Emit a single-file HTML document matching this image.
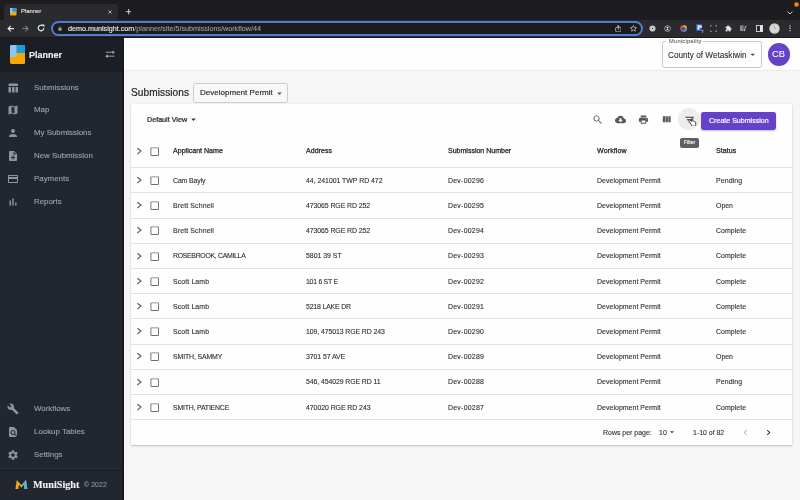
<!DOCTYPE html>
<html><head><meta charset="utf-8">
<style>
*{box-sizing:border-box;margin:0;padding:0}
html,body{width:800px;height:500px;overflow:hidden;background:#f6f6f6;font-family:"Liberation Sans",sans-serif}
body{position:relative}
.a{position:absolute;display:block}
.t{position:absolute;white-space:nowrap;line-height:1;will-change:transform;-webkit-text-stroke-width:0.12px}
</style></head><body>
<div class="a" style="left:0.00px;top:0.00px;width:800.00px;height:19.60px;background:#1d1d1f"></div>
<div class="a" style="left:4.00px;top:4.20px;width:114.00px;height:16.00px;background:#2a2b2e;border-radius:4px 4px 0 0"></div>
<div class="a" style="left:0.00px;top:19.60px;width:800.00px;height:17.00px;background:#2a2b2e"></div>
<div class="a" style="left:0.00px;top:36.60px;width:800.00px;height:1.00px;background:#161617"></div>
<div class="a" style="left:51.00px;top:21.00px;width:591.50px;height:14.90px;border:2px solid #4d7ed4;border-radius:7.5px;background:#1c1c1e"></div>
<svg class="a" style="left:10.00px;top:8.00px;" width="6.50" height="7.50" viewBox="0 0 13 15"><rect x="0" y="0" width="13" height="15" rx="2" fill="#f5a800"/><rect x="0" y="0" width="5" height="10" fill="#8ec5ef"/><rect x="5" y="0" width="8" height="7" fill="#1a9ae0"/></svg>
<div class="t" style="left:21.00px;top:9.35px;font-size:5.9px;color:#e3e3e3">Planner</div>
<svg class="a" style="left:108.00px;top:10.00px;" width="4.00" height="4.00" viewBox="0 0 10 10"><path d="M1 1L9 9M9 1L1 9" stroke="#d8d8d8" stroke-width="1.8"/></svg>
<svg class="a" style="left:125.80px;top:9.30px;" width="5.40" height="5.40" viewBox="0 0 10 10"><path d="M5 0V10M0 5H10" stroke="#e8e8e8" stroke-width="1.6"/></svg>
<svg class="a" style="left:6.90px;top:24.80px;" width="7.20" height="7.20" viewBox="0 0 16 16"><path d="M15.5 8H2.5M8.5 2L2.5 8l6 6" fill="none" stroke="#e8e8e8" stroke-width="2.5"/></svg>
<svg class="a" style="left:22.20px;top:24.80px;" width="7.20" height="7.20" viewBox="0 0 16 16"><path d="M.5 8H13.5M7.5 2l6 6-6 6" fill="none" stroke="#808082" stroke-width="2.3"/></svg>
<svg class="a" style="left:37.10px;top:24.30px;" width="8.00" height="8.00" viewBox="0 0 16 16"><path d="M13.6 8.5A5.6 5.6 0 1 1 11.6 3.7" fill="none" stroke="#e8e8e8" stroke-width="2.4"/><path d="M9.2 1.2h5.6v5.6z" fill="#e8e8e8"/></svg>
<svg class="a" style="left:58.00px;top:26.30px;" width="4.00" height="4.80" viewBox="0 0 8 10"><path d="M2 4.5V3a2 2 0 0 1 4 0v1.5" fill="none" stroke="#9a9a9a" stroke-width="1.2"/><rect x="0.5" y="4.3" width="7" height="5.5" rx="1" fill="#9a9a9a"/></svg>
<div class="t" style="left:67.80px;top:25.10px;font-size:7.2px;color:#ececec">demo.munisight.com<span style="color:#9b9b9b">/planner/site/5/submissions/workflow/44</span></div>
<svg class="a" style="left:614.80px;top:24.80px;" width="6.60" height="7.40" viewBox="0 0 13 15"><rect x="1" y="4.5" width="11" height="9.5" rx="2.5" fill="none" stroke="#c8c8c8" stroke-width="1.6"/><path d="M6.5 9.5V1M4 3.2l2.5-2.2 2.5 2.2" fill="none" stroke="#c8c8c8" stroke-width="1.6"/></svg>
<svg class="a" style="left:629.90px;top:25.40px;" width="7.00" height="6.80" viewBox="0 0 24 23"><path d="M12 1.5l3.1 6.6 7.2.8-5.4 4.9 1.5 7.1L12 17.3l-6.4 3.6 1.5-7.1L1.7 8.9l7.2-.8z" fill="none" stroke="#cfcfcf" stroke-width="2.4" stroke-linejoin="round"/></svg>
<svg class="a" style="left:648.80px;top:24.60px;" width="7.00" height="7.00" viewBox="0 0 14 14"><circle cx="7" cy="7" r="6.2" fill="#bdbdbd"/><circle cx="7" cy="7" r="3.6" fill="#e6e6e6"/><circle cx="7" cy="7" r="1.5" fill="#222"/></svg>
<svg class="a" style="left:664.00px;top:24.60px;" width="7.00" height="7.00" viewBox="0 0 14 14"><circle cx="7" cy="7" r="6.2" fill="#bdbdbd"/><circle cx="7" cy="7" r="5" fill="#2a2b2e"/><path d="M4 3.5h6L7.6 7 10 10.5H4L6.4 7z" fill="#d0d0d0"/></svg>
<svg class="a" style="left:679.50px;top:24.50px;" width="7.20" height="7.20" viewBox="0 0 14 14"><circle cx="7" cy="7" r="6.3" fill="#e0642a"/><path d="M7 .7A6.3 6.3 0 0 1 13.3 7H7z" fill="#f2b830"/><path d="M13.3 7A6.3 6.3 0 0 1 7 13.3V7z" fill="#3fa5e0"/><path d="M7 13.3A6.3 6.3 0 0 1 .7 7H7z" fill="#7b4fd8"/><circle cx="7" cy="7" r="3.3" fill="#35296b"/><circle cx="7" cy="7" r="2.5" fill="#5b56b8"/></svg>
<svg class="a" style="left:695.50px;top:24.00px;" width="8.00" height="9.50" viewBox="0 0 16 19"><rect x="0" y="0" width="12" height="14" rx="1.5" fill="#2e5ec9"/><rect x="3" y="2.5" width="4" height="9" fill="#e6ecff"/><path d="M7 2.5h2.5a2.5 2.5 0 0 1 0 5H7z" fill="#e6ecff"/><text x="11" y="18.5" font-size="7" fill="#cfd8ff" font-family="Liberation Sans" font-weight="bold">7</text></svg>
<svg class="a" style="left:710.00px;top:24.50px;" width="7.00" height="7.00" viewBox="0 0 14 14"><path d="M1 4V1h3M10 1h3v3M13 10v3h-3M4 13H1v-3" fill="none" stroke="#8a8a8a" stroke-width="1.6"/><rect x="4" y="4" width="6" height="6" fill="#2a2b2e"/></svg>
<svg class="a" style="left:725.00px;top:24.50px;" width="7.00" height="7.00" viewBox="0 0 24 24"><path d="M20.5 11H19V7c0-1.1-.9-2-2-2h-4V3.5C13 2.12 11.88 1 10.5 1S8 2.12 8 3.5V5H4c-1.1 0-1.99.9-1.99 2v3.8H3.5c1.49 0 2.7 1.21 2.7 2.7s-1.21 2.7-2.7 2.7H2V20c0 1.1.9 2 2 2h3.8v-1.5c0-1.49 1.21-2.700 2.7-2.7 1.49 0 2.7 1.21 2.7 2.7V22H17c1.1 0 2-.9 2-2v-4h1.5c1.38 0 2.5-1.12 2.5-2.5S21.88 11 20.5 11z" fill="#e8e8e8"/></svg>
<svg class="a" style="left:740.00px;top:24.80px;" width="7.00" height="6.60" viewBox="0 0 14 13"><rect x="0" y="1" width="7" height="11" fill="#8a8a8a"/><rect x="4" y="1" width="5" height="6" fill="#6a6a6a"/><path d="M12.5 1L9 9.5" stroke="#d0d0d0" stroke-width="1.6"/><circle cx="9" cy="10.5" r="1.6" fill="#d0d0d0"/></svg>
<svg class="a" style="left:755.50px;top:24.50px;" width="7.00" height="7.00" viewBox="0 0 14 14"><rect x="0.8" y="0.8" width="12.4" height="12.4" fill="none" stroke="#e8e8e8" stroke-width="1.6"/><rect x="8" y="1" width="5" height="12" fill="#e8e8e8"/></svg>
<svg class="a" style="left:769.00px;top:23.00px;" width="11.00" height="11.00" viewBox="0 0 22 22"><circle cx="11" cy="11" r="10.5" fill="#c9c9c9"/><circle cx="11" cy="11" r="8" fill="#d8d8d8"/><path d="M9 5l4 7" stroke="#b08a30" stroke-width="1.5"/></svg>
<svg class="a" style="left:788.50px;top:25.20px;" width="2.00" height="6.60" viewBox="0 0 4 14"><circle cx="2" cy="2" r="1.5" fill="#e0e0e0"/><circle cx="2" cy="7" r="1.5" fill="#e0e0e0"/><circle cx="2" cy="12" r="1.5" fill="#e0e0e0"/></svg>
<svg class="a" style="left:786.50px;top:10.50px;" width="6.00" height="3.60" viewBox="0 0 12 7"><path d="M1 1l5 5 5-5" fill="none" stroke="#e0e0e0" stroke-width="1.8"/></svg>
<svg class="a" style="left:793.50px;top:2.00px;" width="5.00" height="5.00" viewBox="0 0 10 10"><circle cx="5" cy="5" r="4.5" fill="#f08a1c"/></svg>
<div class="a" style="left:0.00px;top:37.50px;width:123.40px;height:462.50px;background:#22262f"></div>
<div class="a" style="left:0.00px;top:37.50px;width:123.40px;height:34.00px;background:#1b1e25"></div>
<div class="a" style="left:121.80px;top:37.50px;width:2.20px;height:462.50px;background:linear-gradient(90deg,#1d2027,#121419)"></div>
<svg class="a" style="left:9.50px;top:45.00px;" width="15.50" height="19.00" viewBox="0 0 31 38"><defs><clipPath id="lg"><rect x="0" y="0" width="31" height="38" rx="3.5"/></clipPath></defs><g clip-path="url(#lg)"><rect x="0" y="0" width="31" height="38" fill="#f5a900"/><rect x="0" y="0" width="13" height="24" fill="#8ec6f0"/><rect x="13" y="0" width="18" height="16" fill="#1a9be2"/><rect x="13" y="16" width="18" height="8" fill="#f5a900"/></g></svg>
<div class="t" style="left:29.00px;top:51.00px;font-size:9px;color:#f4f4f4;font-weight:700">Planner</div>
<svg class="a" style="left:105.00px;top:50.30px;" width="10.50" height="8.40" viewBox="0 0 21 17"><path d="M1 4.5H17M1 12.5H19" stroke="#a3a7af" stroke-width="1.9"/><path d="M15 .8L20 4.5 15 8.2z" fill="#a3a7af"/><path d="M6 8.8L1 12.5 6 16.2z" fill="#a3a7af"/></svg>
<svg class="a" style="left:7.30px;top:81.60px;" width="12.00" height="12.00" viewBox="0 0 24 24"><path d="M10 10.02h5V21h-5zM17 21h3c1.1 0 2-.9 2-2v-9h-5v11zm3-18H5c-1.1 0-2 .9-2 2v3h19V5c0-1.1-.9-2-2-2zM3 19c0 1.1.9 2 2 2h3V10H3v9z" fill="#8f949d"/></svg>
<div class="t" style="left:34.40px;top:83.65px;font-size:7.9px;color:#9da1aa">Submissions</div>
<svg class="a" style="left:7.30px;top:104.40px;" width="12.00" height="12.00" viewBox="0 0 24 24"><path d="M20.5 3l-.16.03L15 5.1 9 3 3.36 4.9c-.21.07-.36.25-.36.48V20.5c0 .28.22.5.5.5l.16-.03L9 18.9l6 2.1 5.64-1.9c.21-.07.36-.25.36-.48V3.5c0-.28-.22-.5-.5-.5zM15 19l-6-2.11V5l6 2.11V19z" fill="#8f949d"/></svg>
<div class="t" style="left:34.40px;top:106.45px;font-size:7.9px;color:#9da1aa">Map</div>
<svg class="a" style="left:7.30px;top:127.20px;" width="12.00" height="12.00" viewBox="0 0 24 24"><path d="M12 12c2.21 0 4-1.79 4-4s-1.79-4-4-4-4 1.79-4 4 1.79 4 4 4zm0 2c-2.67 0-8 1.34-8 4v2h16v-2c0-2.66-5.33-4-8-4z" fill="#8f949d"/></svg>
<div class="t" style="left:34.40px;top:129.25px;font-size:7.9px;color:#9da1aa">My Submissions</div>
<svg class="a" style="left:7.30px;top:150.00px;" width="12.00" height="12.00" viewBox="0 0 24 24"><path d="M14 2H6c-1.1 0-1.99.9-1.99 2L4 20c0 1.1.89 2 1.99 2H18c1.1 0 2-.9 2-2V8l-6-6zm2 14h-3v3h-2v-3H8v-2h3v-3h2v3h3v2zm-3-7V3.5L18.5 9H13z" fill="#8f949d"/></svg>
<div class="t" style="left:34.40px;top:152.05px;font-size:7.9px;color:#9da1aa">New Submission</div>
<svg class="a" style="left:7.30px;top:172.80px;" width="12.00" height="12.00" viewBox="0 0 24 24"><path d="M20 4H4c-1.11 0-1.99.89-1.99 2L2 18c0 1.11.89 2 2 2h16c1.11 0 2-.89 2-2V6c0-1.11-.89-2-2-2zm0 14H4v-6h16v6zm0-10H4V6h16v2z" fill="#8f949d"/></svg>
<div class="t" style="left:34.40px;top:174.85px;font-size:7.9px;color:#9da1aa">Payments</div>
<svg class="a" style="left:7.30px;top:195.60px;" width="12.00" height="12.00" viewBox="0 0 24 24"><path d="M5 9.2h3V19H5zM10.6 5h2.8v14h-2.8zm5.6 8H19v6h-2.8z" fill="#8f949d"/></svg>
<div class="t" style="left:34.40px;top:197.65px;font-size:7.9px;color:#9da1aa">Reports</div>
<svg class="a" style="left:7.30px;top:403.30px;" width="12.00" height="12.00" viewBox="0 0 24 24"><path d="M22.7 19l-9.1-9.1c.9-2.3.4-5-1.5-6.9-2-2-5-2.4-7.4-1.3L9 6 6 9 1.6 4.7C.4 7.1.9 10.1 2.9 12.1c1.9 1.9 4.6 2.4 6.9 1.5l9.1 9.1c.4.4 1 .4 1.4 0l2.3-2.3c.5-.4.5-1.1.1-1.4z" fill="#8f949d"/></svg>
<div class="t" style="left:34.40px;top:405.35px;font-size:7.9px;color:#9da1aa">Workflows</div>
<svg class="a" style="left:7.30px;top:426.20px;" width="12.00" height="12.00" viewBox="0 0 24 24"><path d="M20 19.59V8l-6-6H6c-1.1 0-1.99.9-1.99 2L4 20c0 1.1.89 2 1.99 2H18c.45 0 .85-.15 1.19-.4l-4.43-4.43c-.8.52-1.74.83-2.76.83-2.76 0-5-2.24-5-5s2.24-5 5-5 5 2.24 5 5c0 1.02-.31 1.96-.83 2.75L20 19.59zM9 13c0 1.66 1.34 3 3 3s3-1.34 3-3-1.34-3-3-3-3 1.34-3 3z" fill="#8f949d"/></svg>
<div class="t" style="left:34.40px;top:428.25px;font-size:7.9px;color:#9da1aa">Lookup Tables</div>
<svg class="a" style="left:7.30px;top:449.10px;" width="12.00" height="12.00" viewBox="0 0 24 24"><path d="M19.14 12.94c.04-.3.06-.61.06-.94 0-.32-.02-.64-.07-.94l2.03-1.58c.18-.14.23-.41.12-.61l-1.92-3.32c-.12-.22-.37-.29-.59-.22l-2.39.96c-.5-.38-1.03-.7-1.62-.94l-.36-2.54c-.04-.24-.24-.41-.48-.41h-3.84c-.24 0-.43.17-.47.41l-.36 2.54c-.59.24-1.130.57-1.62.94l-2.39-.96c-.22-.08-.47 0-.59.22L2.74 8.87c-.12.21-.08.47.12.61l2.03 1.58c-.05.3-.09.63-.09.94s.02.64.07.94l-2.03 1.58c-.18.14-.23.41-.12.61l1.92 3.32c.12.22.37.29.59.22l2.39-.96c.5.38 1.03.7 1.62.94l.36 2.54c.05.24.24.41.48.41h3.840c.24 0 .44-.17.47-.41l.36-2.54c.59-.24 1.13-.56 1.62-.94l2.39.96c.22.08.47 0 .59-.22l1.92-3.32c.12-.22.07-.47-.12-.61l-2.01-1.58zM12 15.6c-1.98 0-3.6-1.62-3.6-3.6s1.62-3.6 3.6-3.6 3.6 1.62 3.6 3.6-1.62 3.6-3.6 3.6z" fill="#8f949d"/></svg>
<div class="t" style="left:34.40px;top:451.15px;font-size:7.9px;color:#9da1aa">Settings</div>
<div class="a" style="left:0.00px;top:469.80px;width:123.40px;height:0.80px;background:#181b21"></div>
<svg class="a" style="left:15.30px;top:479.60px;" width="12.80" height="9.20" viewBox="0 0 25 19"><path d="M0 19L3 0l9.5 11L22 0l3 19h-6l-1.5-9-5 6-5-6L6 19z" fill="#f2a81d"/><path d="M12.5 11L22 0l3 19h-6l-1.5-9z" fill="#4fb2e3"/><path d="M3 0l9.5 11-1.5 2z" fill="#6cc04a"/></svg>
<div class="t" style="left:33.00px;top:480.10px;font-size:10.2px;color:#f0f0f0;font-weight:700;font-family:'Liberation Serif'">MuniSight</div>
<div class="t" style="left:84.00px;top:481.75px;font-size:6.9px;color:#8e939c;letter-spacing:0.1px">© 2022</div>
<div class="a" style="left:124.00px;top:37.50px;width:676.00px;height:33.20px;background:#fdfdfd;border-bottom:0.6px solid #ebebeb"></div>
<div class="a" style="left:661.80px;top:41.00px;width:100.20px;height:27.00px;border:0.7px solid #c9c9c9;border-radius:2.4px"></div>
<div class="a" style="left:666.20px;top:40.00px;width:36.40px;height:3.00px;background:#fff"></div>
<div class="t" style="left:668.90px;top:38.60px;font-size:5.8px;color:#6b6b6b;letter-spacing:0.2px">Municipality</div>
<div class="t" style="left:668.10px;top:51.50px;font-size:8.2px;color:#2a2a2a;-webkit-text-stroke-width:0.08px">County of Wetaskiwin</div>
<svg class="a" style="left:746.80px;top:49.30px;" width="11.40" height="11.40" viewBox="0 0 24 24"><path d="M7 10l5 5 5-5z" fill="#555"/></svg>
<div class="a" style="left:767.80px;top:43.10px;width:22.60px;height:22.60px;border-radius:50%;background:#6542c8"></div>
<div class="t" style="left:772.30px;top:50.35px;font-size:9.3px;color:#fff;-webkit-text-stroke-width:0.05px">CB</div>
<div class="t" style="left:131.30px;top:87.75px;font-size:10.1px;color:#1e1e1e;letter-spacing:0.08px;-webkit-text-stroke-width:0.2px">Submissions</div>
<div class="a" style="left:193.00px;top:83.20px;width:95.00px;height:19.40px;border:0.7px solid #cdcdcd;border-radius:2.4px;background:#f8f8f8"></div>
<div class="t" style="left:199.70px;top:89.18px;font-size:8.04px;color:#2a2a2a;-webkit-text-stroke-width:0.16px">Development Permit</div>
<svg class="a" style="left:274.00px;top:87.50px;" width="11.00" height="11.00" viewBox="0 0 24 24"><path d="M7 10l5 5 5-5z" fill="#555"/></svg>
<div class="a" style="left:131.30px;top:104.00px;width:661.00px;height:341.00px;background:#fefefe;border-radius:1.5px;box-shadow:0 1px 2px rgba(0,0,0,.22),0 0 1.2px rgba(0,0,0,.1)"></div>
<div class="t" style="left:146.90px;top:116.82px;font-size:7.17px;color:#262626;-webkit-text-stroke-width:0.22px">Default View</div>
<svg class="a" style="left:187.60px;top:114.10px;" width="11.00" height="11.00" viewBox="0 0 24 24"><path d="M7 10l5 5 5-5z" fill="#333"/></svg>
<div class="a" style="left:678.20px;top:108.10px;width:21.60px;height:21.60px;border-radius:50%;background:#ededed"></div>
<svg class="a" style="left:592.30px;top:114.10px;" width="11.40" height="11.40" viewBox="0 0 24 24"><path d="M15.5 14h-.79l-.28-.27C15.41 12.59 16 11.11 16 9.5 16 5.91 13.09 3 9.5 3S3 5.91 3 9.5 5.91 16 9.5 16c1.61 0 3.09-.59 4.23-1.57l.27.28v.79l5 4.99L20.49 19l-4.99-5zm-6 0C7.01 14 5 11.990 5 9.5S7.01 5 9.5 5 14 7.01 14 9.5 11.99 14 9.5 14z" fill="#585858"/></svg>
<svg class="a" style="left:615.00px;top:114.30px;" width="11.00" height="11.00" viewBox="0 0 24 24"><path d="M19.35 10.04C18.67 6.59 15.64 4 12 4 9.11 4 6.6 5.64 5.35 8.04 2.34 8.36 0 10.91 0 14c0 3.31 2.69 6 6 6h13c2.76 0 5-2.24 5-5 0-2.64-2.05-4.78-4.65-4.96zM17 13l-5 5-5-5h3V9h4v4h3z" fill="#585858"/></svg>
<svg class="a" style="left:638.30px;top:114.30px;" width="11.00" height="11.00" viewBox="0 0 24 24"><path d="M19 8H5c-1.66 0-3 1.34-3 3v6h4v4h12v-4h4v-6c0-1.66-1.34-3-3-3zm-3 11H8v-5h8v5zm3-7c-.55 0-1-.45-1-1s.45-1 1-1 1 .45 1 1-.45 1-1 1zm-1-9H6v4h12V3z" fill="#585858"/></svg>
<svg class="a" style="left:661.30px;top:114.30px;" width="11.00" height="11.00" viewBox="0 0 24 24"><path d="M10 18h5V5h-5v13zm-6 0h5V5H4v13zM16 5v13h5V5h-5z" fill="#585858"/></svg>
<svg class="a" style="left:683.80px;top:113.70px;" width="11.40" height="11.40" viewBox="0 0 24 24"><path d="M10 18h4v-2h-4v2zM3 6v2h18V6H3zm3 7h12v-2H6v2z" fill="#3a3a3a"/></svg>
<svg class="a" style="left:687.80px;top:117.60px;" width="9.20" height="8.40" viewBox="0 0 14 13"><path d="M1.2 3.2c.5-.6 1.3-.6 1.8-.1l2.4 2.2V1.6c0-.6.5-1 1-1s1 .4 1 1v3.2l.3-.1c.6-.1 1.1.1 1.3.6.5-.2 1.1 0 1.3.5.6-.1 1.2.3 1.3.9l.4 2.7c.1 1.4-.6 2.6-1.8 3.2H6.4L1.3 4.6c-.4-.4-.4-1 0-1.4z" fill="#fff" stroke="#222" stroke-width="1.3" stroke-linejoin="round"/></svg>
<div class="a" style="left:701.00px;top:112.20px;width:75.00px;height:17.60px;background:#6542c8;border-radius:2.4px;box-shadow:0 1px 2px rgba(0,0,0,.25)"></div>
<div class="t" style="left:708.70px;top:117.27px;font-size:7.07px;color:#fff;-webkit-text-stroke-width:0.18px">Create Submission</div>
<div class="a" style="left:680.40px;top:137.70px;width:18.40px;height:9.90px;background:#5f5f5f;border-radius:2px"></div>
<div class="t" style="left:684.10px;top:140.10px;font-size:5px;color:#fff">Filter</div>
<div class="a" style="left:131.30px;top:167.10px;width:660.50px;height:0.60px;background:#e2e2e2"></div>
<div class="t" style="left:172.50px;top:147.17px;font-size:7.05px;color:#222;letter-spacing:0.008px;-webkit-text-stroke-width:0.25px">Applicant Name</div>
<div class="t" style="left:306.20px;top:147.17px;font-size:7.05px;color:#222;letter-spacing:0.033px;-webkit-text-stroke-width:0.25px">Address</div>
<div class="t" style="left:448.00px;top:147.17px;font-size:7.05px;color:#222;letter-spacing:-0.019px;-webkit-text-stroke-width:0.25px">Submission Number</div>
<div class="t" style="left:597.10px;top:147.17px;font-size:7.05px;color:#222;letter-spacing:0.114px;-webkit-text-stroke-width:0.25px">Workflow</div>
<div class="t" style="left:716.10px;top:147.17px;font-size:7.05px;color:#222;letter-spacing:0.08px;-webkit-text-stroke-width:0.25px">Status</div>
<svg class="a" style="left:149.00px;top:145.90px;" width="11.40" height="11.40" viewBox="0 0 24 24"><path d="M19 5v14H5V5h14m0-2H5c-1.1 0-2 .9-2 2v14c0 1.1.9 2 2 2h14c1.1 0 2-.9 2-2V5c0-1.1-.9-2-2-2z" fill="#6f6f6f"/></svg>
<svg class="a" style="left:136.00px;top:147.00px;" width="6.00" height="8.00" viewBox="0 0 6 8"><path d="M1.4 1.2L4.9 4.1 1.4 7" fill="none" stroke="#5a5a5a" stroke-width="1.15"/></svg>
<div class="a" style="left:131.30px;top:192.30px;width:660.50px;height:0.60px;background:#e2e2e2"></div>
<div class="t" style="left:172.50px;top:177.72px;font-size:6.95px;color:#333;letter-spacing:-0.125px;transform:scaleY(1.09);transform-origin:0 55%">Cam Bayly</div>
<div class="t" style="left:306.20px;top:177.72px;font-size:6.95px;color:#333;letter-spacing:-0.038px;transform:scaleY(1.09);transform-origin:0 55%">44, 241001 TWP RD 472</div>
<div class="t" style="left:448.00px;top:177.72px;font-size:6.95px;color:#333;letter-spacing:0.25px;transform:scaleY(1.09);transform-origin:0 55%">Dev-00296</div>
<div class="t" style="left:597.10px;top:177.72px;font-size:6.95px;color:#333;letter-spacing:0.047px;transform:scaleY(1.09);transform-origin:0 55%">Development Permit</div>
<div class="t" style="left:716.10px;top:177.72px;font-size:6.95px;color:#333;letter-spacing:0.1px;transform:scaleY(1.09);transform-origin:0 55%">Pending</div>
<svg class="a" style="left:149.00px;top:174.90px;" width="11.40" height="11.40" viewBox="0 0 24 24"><path d="M19 5v14H5V5h14m0-2H5c-1.1 0-2 .9-2 2v14c0 1.1.9 2 2 2h14c1.1 0 2-.9 2-2V5c0-1.1-.9-2-2-2z" fill="#6f6f6f"/></svg>
<svg class="a" style="left:136.00px;top:176.00px;" width="6.00" height="8.00" viewBox="0 0 6 8"><path d="M1.4 1.2L4.9 4.1 1.4 7" fill="none" stroke="#5a5a5a" stroke-width="1.15"/></svg>
<div class="a" style="left:131.30px;top:217.50px;width:660.50px;height:0.60px;background:#e2e2e2"></div>
<div class="t" style="left:172.50px;top:202.92px;font-size:6.95px;color:#333;letter-spacing:0.125px;transform:scaleY(1.09);transform-origin:0 55%">Brett Schnell</div>
<div class="t" style="left:306.20px;top:202.92px;font-size:6.95px;color:#333;letter-spacing:-0.094px;transform:scaleY(1.09);transform-origin:0 55%">473065 RGE RD 252</div>
<div class="t" style="left:448.00px;top:202.92px;font-size:6.95px;color:#333;letter-spacing:0.25px;transform:scaleY(1.09);transform-origin:0 55%">Dev-00295</div>
<div class="t" style="left:597.10px;top:202.92px;font-size:6.95px;color:#333;letter-spacing:0.047px;transform:scaleY(1.09);transform-origin:0 55%">Development Permit</div>
<div class="t" style="left:716.10px;top:202.92px;font-size:6.95px;color:#333;transform:scaleY(1.09);transform-origin:0 55%">Open</div>
<svg class="a" style="left:149.00px;top:200.10px;" width="11.40" height="11.40" viewBox="0 0 24 24"><path d="M19 5v14H5V5h14m0-2H5c-1.1 0-2 .9-2 2v14c0 1.1.9 2 2 2h14c1.1 0 2-.9 2-2V5c0-1.1-.9-2-2-2z" fill="#6f6f6f"/></svg>
<svg class="a" style="left:136.00px;top:201.20px;" width="6.00" height="8.00" viewBox="0 0 6 8"><path d="M1.4 1.2L4.9 4.1 1.4 7" fill="none" stroke="#5a5a5a" stroke-width="1.15"/></svg>
<div class="a" style="left:131.30px;top:242.70px;width:660.50px;height:0.60px;background:#e2e2e2"></div>
<div class="t" style="left:172.50px;top:228.12px;font-size:6.95px;color:#333;letter-spacing:0.125px;transform:scaleY(1.09);transform-origin:0 55%">Brett Schnell</div>
<div class="t" style="left:306.20px;top:228.12px;font-size:6.95px;color:#333;letter-spacing:-0.094px;transform:scaleY(1.09);transform-origin:0 55%">473065 RGE RD 252</div>
<div class="t" style="left:448.00px;top:228.12px;font-size:6.95px;color:#333;letter-spacing:0.25px;transform:scaleY(1.09);transform-origin:0 55%">Dev-00294</div>
<div class="t" style="left:597.10px;top:228.12px;font-size:6.95px;color:#333;letter-spacing:0.047px;transform:scaleY(1.09);transform-origin:0 55%">Development Permit</div>
<div class="t" style="left:716.10px;top:228.12px;font-size:6.95px;color:#333;letter-spacing:0.057px;transform:scaleY(1.09);transform-origin:0 55%">Complete</div>
<svg class="a" style="left:149.00px;top:225.30px;" width="11.40" height="11.40" viewBox="0 0 24 24"><path d="M19 5v14H5V5h14m0-2H5c-1.1 0-2 .9-2 2v14c0 1.1.9 2 2 2h14c1.1 0 2-.9 2-2V5c0-1.1-.9-2-2-2z" fill="#6f6f6f"/></svg>
<svg class="a" style="left:136.00px;top:226.40px;" width="6.00" height="8.00" viewBox="0 0 6 8"><path d="M1.4 1.2L4.9 4.1 1.4 7" fill="none" stroke="#5a5a5a" stroke-width="1.15"/></svg>
<div class="a" style="left:131.30px;top:267.90px;width:660.50px;height:0.60px;background:#e2e2e2"></div>
<div class="t" style="left:172.50px;top:253.33px;font-size:6.95px;color:#333;letter-spacing:-0.324px;transform:scaleY(1.09);transform-origin:0 55%">ROSEBROOK, CAMILLA</div>
<div class="t" style="left:306.20px;top:253.33px;font-size:6.95px;color:#333;letter-spacing:-0.028px;transform:scaleY(1.09);transform-origin:0 55%">5801 39 ST</div>
<div class="t" style="left:448.00px;top:253.33px;font-size:6.95px;color:#333;letter-spacing:0.25px;transform:scaleY(1.09);transform-origin:0 55%">Dev-00293</div>
<div class="t" style="left:597.10px;top:253.33px;font-size:6.95px;color:#333;letter-spacing:0.047px;transform:scaleY(1.09);transform-origin:0 55%">Development Permit</div>
<div class="t" style="left:716.10px;top:253.33px;font-size:6.95px;color:#333;letter-spacing:0.057px;transform:scaleY(1.09);transform-origin:0 55%">Complete</div>
<svg class="a" style="left:149.00px;top:250.50px;" width="11.40" height="11.40" viewBox="0 0 24 24"><path d="M19 5v14H5V5h14m0-2H5c-1.1 0-2 .9-2 2v14c0 1.1.9 2 2 2h14c1.1 0 2-.9 2-2V5c0-1.1-.9-2-2-2z" fill="#6f6f6f"/></svg>
<svg class="a" style="left:136.00px;top:251.60px;" width="6.00" height="8.00" viewBox="0 0 6 8"><path d="M1.4 1.2L4.9 4.1 1.4 7" fill="none" stroke="#5a5a5a" stroke-width="1.15"/></svg>
<div class="a" style="left:131.30px;top:293.10px;width:660.50px;height:0.60px;background:#e2e2e2"></div>
<div class="t" style="left:172.50px;top:278.52px;font-size:6.95px;color:#333;letter-spacing:0.111px;transform:scaleY(1.09);transform-origin:0 55%">Scott Lamb</div>
<div class="t" style="left:306.20px;top:278.52px;font-size:6.95px;color:#333;letter-spacing:-0.278px;transform:scaleY(1.09);transform-origin:0 55%">101 6 ST E</div>
<div class="t" style="left:448.00px;top:278.52px;font-size:6.95px;color:#333;letter-spacing:0.25px;transform:scaleY(1.09);transform-origin:0 55%">Dev-00292</div>
<div class="t" style="left:597.10px;top:278.52px;font-size:6.95px;color:#333;letter-spacing:0.047px;transform:scaleY(1.09);transform-origin:0 55%">Development Permit</div>
<div class="t" style="left:716.10px;top:278.52px;font-size:6.95px;color:#333;letter-spacing:0.057px;transform:scaleY(1.09);transform-origin:0 55%">Complete</div>
<svg class="a" style="left:149.00px;top:275.70px;" width="11.40" height="11.40" viewBox="0 0 24 24"><path d="M19 5v14H5V5h14m0-2H5c-1.1 0-2 .9-2 2v14c0 1.1.9 2 2 2h14c1.1 0 2-.9 2-2V5c0-1.1-.9-2-2-2z" fill="#6f6f6f"/></svg>
<svg class="a" style="left:136.00px;top:276.80px;" width="6.00" height="8.00" viewBox="0 0 6 8"><path d="M1.4 1.2L4.9 4.1 1.4 7" fill="none" stroke="#5a5a5a" stroke-width="1.15"/></svg>
<div class="a" style="left:131.30px;top:318.30px;width:660.50px;height:0.60px;background:#e2e2e2"></div>
<div class="t" style="left:172.50px;top:303.72px;font-size:6.95px;color:#333;letter-spacing:0.111px;transform:scaleY(1.09);transform-origin:0 55%">Scott Lamb</div>
<div class="t" style="left:306.20px;top:303.72px;font-size:6.95px;color:#333;letter-spacing:-0.182px;transform:scaleY(1.09);transform-origin:0 55%">5218 LAKE DR</div>
<div class="t" style="left:448.00px;top:303.72px;font-size:6.95px;color:#333;letter-spacing:0.25px;transform:scaleY(1.09);transform-origin:0 55%">Dev-00291</div>
<div class="t" style="left:597.10px;top:303.72px;font-size:6.95px;color:#333;letter-spacing:0.047px;transform:scaleY(1.09);transform-origin:0 55%">Development Permit</div>
<div class="t" style="left:716.10px;top:303.72px;font-size:6.95px;color:#333;letter-spacing:0.057px;transform:scaleY(1.09);transform-origin:0 55%">Complete</div>
<svg class="a" style="left:149.00px;top:300.90px;" width="11.40" height="11.40" viewBox="0 0 24 24"><path d="M19 5v14H5V5h14m0-2H5c-1.1 0-2 .9-2 2v14c0 1.1.9 2 2 2h14c1.1 0 2-.9 2-2V5c0-1.1-.9-2-2-2z" fill="#6f6f6f"/></svg>
<svg class="a" style="left:136.00px;top:302.00px;" width="6.00" height="8.00" viewBox="0 0 6 8"><path d="M1.4 1.2L4.9 4.1 1.4 7" fill="none" stroke="#5a5a5a" stroke-width="1.15"/></svg>
<div class="a" style="left:131.30px;top:343.50px;width:660.50px;height:0.60px;background:#e2e2e2"></div>
<div class="t" style="left:172.50px;top:328.93px;font-size:6.95px;color:#333;letter-spacing:0.111px;transform:scaleY(1.09);transform-origin:0 55%">Scott Lamb</div>
<div class="t" style="left:306.20px;top:328.93px;font-size:6.95px;color:#333;letter-spacing:-0.107px;transform:scaleY(1.09);transform-origin:0 55%">109, 475013 RGE RD 243</div>
<div class="t" style="left:448.00px;top:328.93px;font-size:6.95px;color:#333;letter-spacing:0.25px;transform:scaleY(1.09);transform-origin:0 55%">Dev-00290</div>
<div class="t" style="left:597.10px;top:328.93px;font-size:6.95px;color:#333;letter-spacing:0.047px;transform:scaleY(1.09);transform-origin:0 55%">Development Permit</div>
<div class="t" style="left:716.10px;top:328.93px;font-size:6.95px;color:#333;letter-spacing:0.057px;transform:scaleY(1.09);transform-origin:0 55%">Complete</div>
<svg class="a" style="left:149.00px;top:326.10px;" width="11.40" height="11.40" viewBox="0 0 24 24"><path d="M19 5v14H5V5h14m0-2H5c-1.1 0-2 .9-2 2v14c0 1.1.9 2 2 2h14c1.1 0 2-.9 2-2V5c0-1.1-.9-2-2-2z" fill="#6f6f6f"/></svg>
<svg class="a" style="left:136.00px;top:327.20px;" width="6.00" height="8.00" viewBox="0 0 6 8"><path d="M1.4 1.2L4.9 4.1 1.4 7" fill="none" stroke="#5a5a5a" stroke-width="1.15"/></svg>
<div class="a" style="left:131.30px;top:368.70px;width:660.50px;height:0.60px;background:#e2e2e2"></div>
<div class="t" style="left:172.50px;top:354.12px;font-size:6.95px;color:#333;letter-spacing:-0.136px;transform:scaleY(1.09);transform-origin:0 55%">SMITH, SAMMY</div>
<div class="t" style="left:306.20px;top:354.12px;font-size:6.95px;color:#333;letter-spacing:-0.075px;transform:scaleY(1.09);transform-origin:0 55%">3701 57 AVE</div>
<div class="t" style="left:448.00px;top:354.12px;font-size:6.95px;color:#333;letter-spacing:0.25px;transform:scaleY(1.09);transform-origin:0 55%">Dev-00289</div>
<div class="t" style="left:597.10px;top:354.12px;font-size:6.95px;color:#333;letter-spacing:0.047px;transform:scaleY(1.09);transform-origin:0 55%">Development Permit</div>
<div class="t" style="left:716.10px;top:354.12px;font-size:6.95px;color:#333;transform:scaleY(1.09);transform-origin:0 55%">Open</div>
<svg class="a" style="left:149.00px;top:351.30px;" width="11.40" height="11.40" viewBox="0 0 24 24"><path d="M19 5v14H5V5h14m0-2H5c-1.1 0-2 .9-2 2v14c0 1.1.9 2 2 2h14c1.1 0 2-.9 2-2V5c0-1.1-.9-2-2-2z" fill="#6f6f6f"/></svg>
<svg class="a" style="left:136.00px;top:352.40px;" width="6.00" height="8.00" viewBox="0 0 6 8"><path d="M1.4 1.2L4.9 4.1 1.4 7" fill="none" stroke="#5a5a5a" stroke-width="1.15"/></svg>
<div class="a" style="left:131.30px;top:393.90px;width:660.50px;height:0.60px;background:#e2e2e2"></div>
<div class="t" style="left:306.20px;top:379.32px;font-size:6.95px;color:#333;letter-spacing:-0.1px;transform:scaleY(1.09);transform-origin:0 55%">546, 454029 RGE RD 11</div>
<div class="t" style="left:448.00px;top:379.32px;font-size:6.95px;color:#333;letter-spacing:0.25px;transform:scaleY(1.09);transform-origin:0 55%">Dev-00288</div>
<div class="t" style="left:597.10px;top:379.32px;font-size:6.95px;color:#333;letter-spacing:0.047px;transform:scaleY(1.09);transform-origin:0 55%">Development Permit</div>
<div class="t" style="left:716.10px;top:379.32px;font-size:6.95px;color:#333;letter-spacing:0.1px;transform:scaleY(1.09);transform-origin:0 55%">Pending</div>
<svg class="a" style="left:149.00px;top:376.50px;" width="11.40" height="11.40" viewBox="0 0 24 24"><path d="M19 5v14H5V5h14m0-2H5c-1.1 0-2 .9-2 2v14c0 1.1.9 2 2 2h14c1.1 0 2-.9 2-2V5c0-1.1-.9-2-2-2z" fill="#6f6f6f"/></svg>
<svg class="a" style="left:136.00px;top:377.60px;" width="6.00" height="8.00" viewBox="0 0 6 8"><path d="M1.4 1.2L4.9 4.1 1.4 7" fill="none" stroke="#5a5a5a" stroke-width="1.15"/></svg>
<div class="a" style="left:131.30px;top:419.10px;width:660.50px;height:0.60px;background:#e2e2e2"></div>
<div class="t" style="left:172.50px;top:404.52px;font-size:6.95px;color:#333;letter-spacing:-0.2px;transform:scaleY(1.09);transform-origin:0 55%">SMITH, PATIENCE</div>
<div class="t" style="left:306.20px;top:404.52px;font-size:6.95px;color:#333;letter-spacing:-0.062px;transform:scaleY(1.09);transform-origin:0 55%">470020 RGE RD 243</div>
<div class="t" style="left:448.00px;top:404.52px;font-size:6.95px;color:#333;letter-spacing:0.25px;transform:scaleY(1.09);transform-origin:0 55%">Dev-00287</div>
<div class="t" style="left:597.10px;top:404.52px;font-size:6.95px;color:#333;letter-spacing:0.047px;transform:scaleY(1.09);transform-origin:0 55%">Development Permit</div>
<div class="t" style="left:716.10px;top:404.52px;font-size:6.95px;color:#333;letter-spacing:0.057px;transform:scaleY(1.09);transform-origin:0 55%">Complete</div>
<svg class="a" style="left:149.00px;top:401.70px;" width="11.40" height="11.40" viewBox="0 0 24 24"><path d="M19 5v14H5V5h14m0-2H5c-1.1 0-2 .9-2 2v14c0 1.1.9 2 2 2h14c1.1 0 2-.9 2-2V5c0-1.1-.9-2-2-2z" fill="#6f6f6f"/></svg>
<svg class="a" style="left:136.00px;top:402.80px;" width="6.00" height="8.00" viewBox="0 0 6 8"><path d="M1.4 1.2L4.9 4.1 1.4 7" fill="none" stroke="#5a5a5a" stroke-width="1.15"/></svg>
<div class="t" style="left:602.50px;top:429.81px;font-size:6.97px;color:#333">Rows per page:</div>
<div class="t" style="left:659.30px;top:429.81px;font-size:6.97px;color:#333;letter-spacing:0.2px">10</div>
<svg class="a" style="left:666.80px;top:427.30px;" width="10.00" height="10.00" viewBox="0 0 24 24"><path d="M7 10l5 5 5-5z" fill="#444"/></svg>
<div class="t" style="left:693.30px;top:429.84px;font-size:6.93px;color:#333">1-10 of 82</div>
<svg class="a" style="left:740.00px;top:427.00px;" width="11.00" height="11.00" viewBox="0 0 24 24"><path d="M15.41 16.59L10.83 12l4.58-4.59L14 6l-6 6 6 6 1.410-1.41z" fill="#b8b8b8"/></svg>
<svg class="a" style="left:762.80px;top:427.00px;" width="11.00" height="11.00" viewBox="0 0 24 24"><path d="M8.59 16.59L13.17 12 8.59 7.41 10 6l6 6-6 6-1.41-1.41z" fill="#222"/></svg>
</body></html>
